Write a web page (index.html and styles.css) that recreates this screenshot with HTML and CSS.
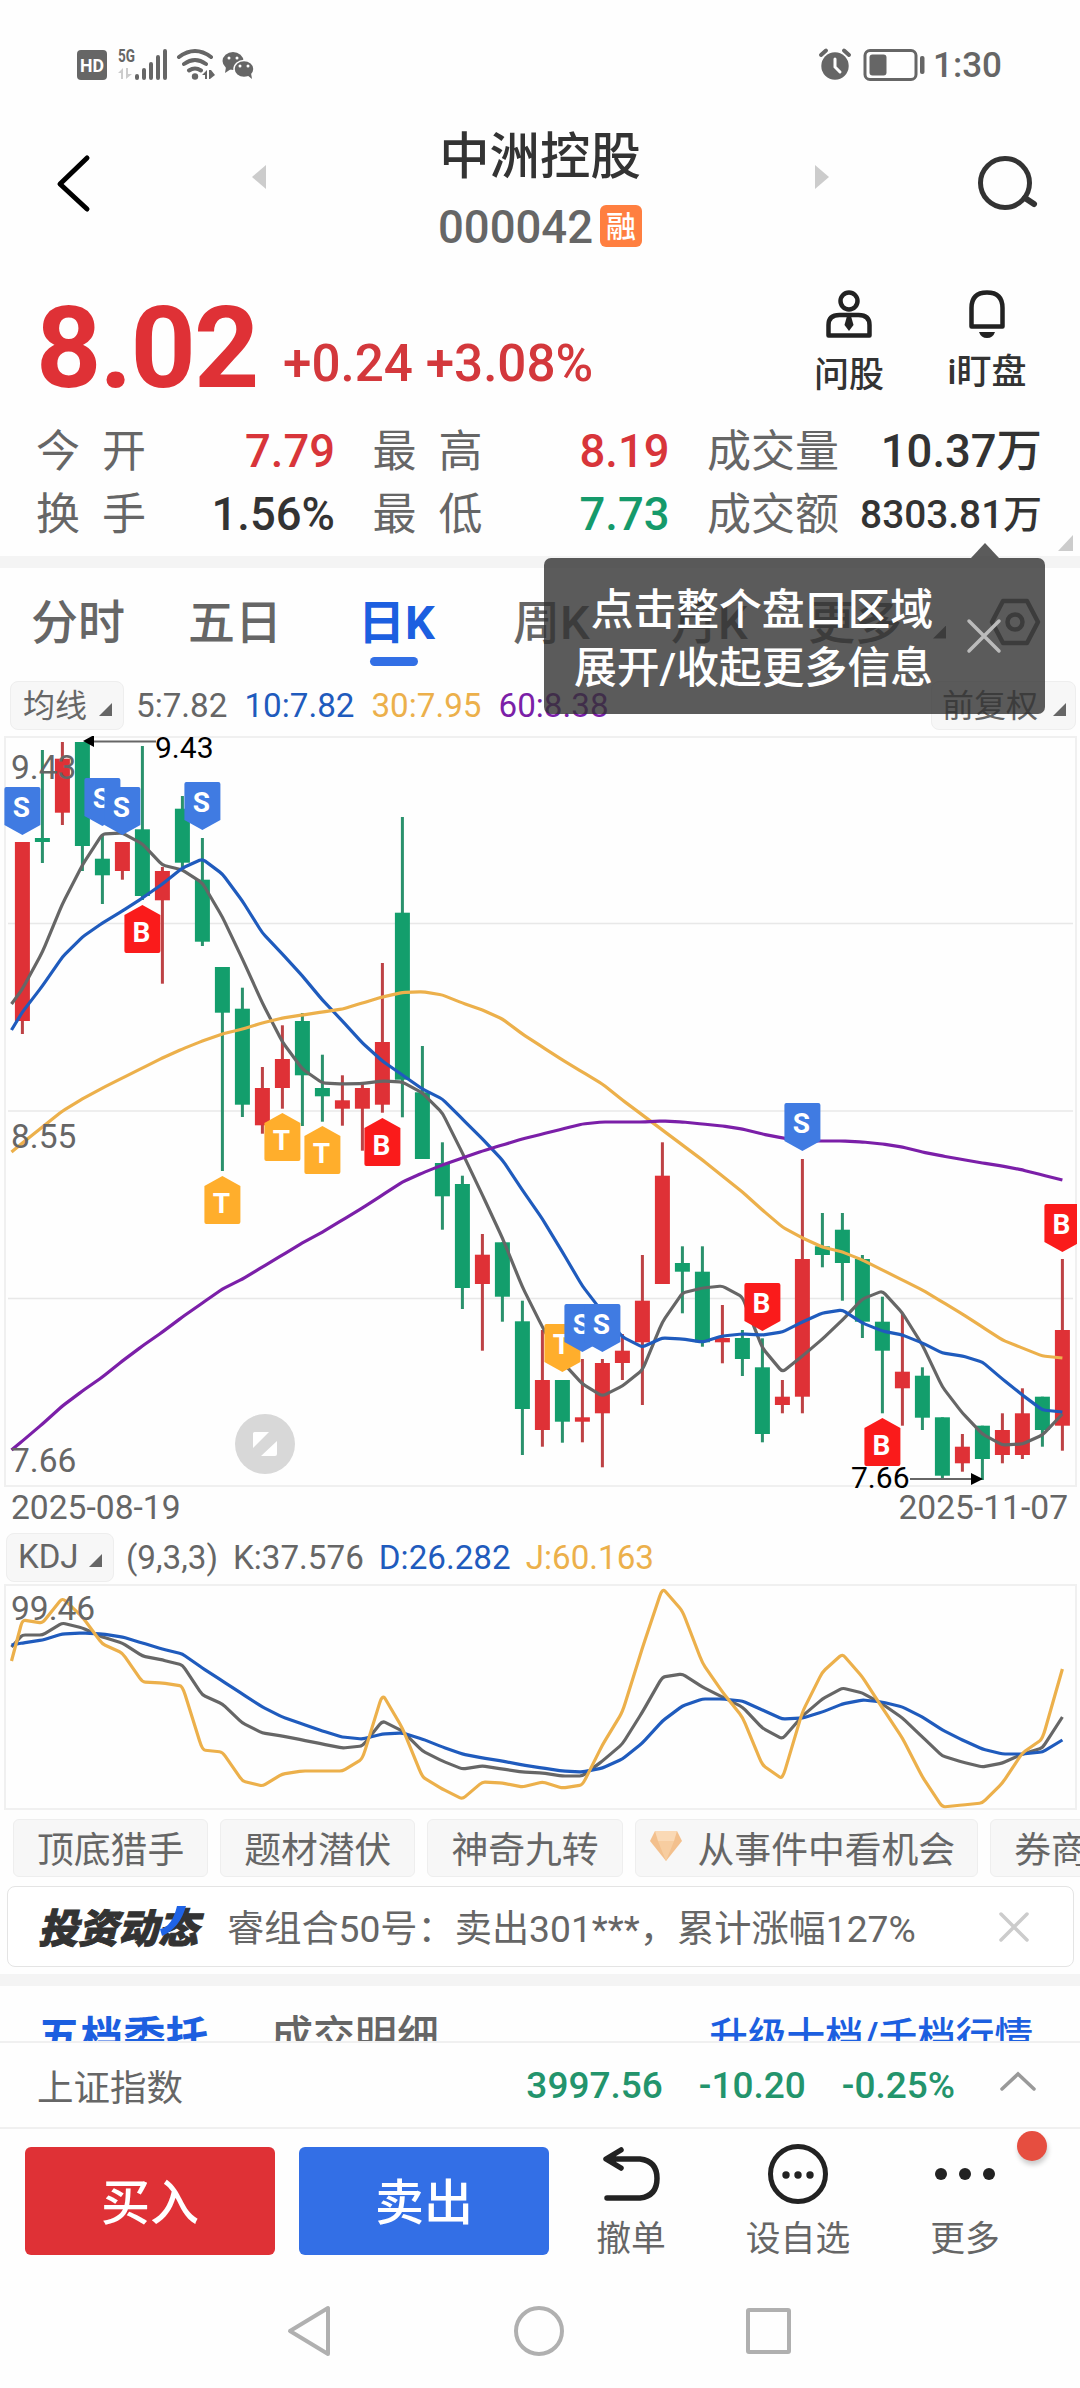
FILE: index.html
```html
<!DOCTYPE html>
<html lang="zh-CN">
<head>
  <meta charset="UTF-8">
  <meta name="viewport" content="width=device-width, initial-scale=1.0">
  <title>中洲控股 000042</title>
  <link rel="stylesheet" href="styles.css">
</head>
<body>

  <div class="status-bar">
    <svg class="status-left" width="180" height="34" viewBox="0 0 180 34" fill="#666">
      <rect x="0" y="3" width="30" height="30" rx="4"/>
      <text x="15" y="25" font-size="19" font-weight="700" fill="#fff" text-anchor="middle" textLength="24" lengthAdjust="spacingAndGlyphs">HD</text>
      <text x="41" y="15" font-size="18" font-weight="700" textLength="17" lengthAdjust="spacingAndGlyphs">5G</text>
      <path d="M41 26l5-5v11h-2v-6zM49 21h2v6h4l-6 5z" fill="#ccc"/>
      <path d="M60 29v2M67 23v8M74 17v14M81 10v21M88 4v27" stroke="#666" stroke-width="4" stroke-linecap="round"/>
      <g fill="none" stroke="#666" stroke-width="4" stroke-linecap="round">
        <path d="M102 10q16-12 32 0M107 17q11-8 22 0M112 23.500q6-4 12 0"/>
      </g>
      <circle cx="118" cy="29.500" r="3.200"/>
      <path d="M125 28l5-5v9h-2v-4zM132 23h2l4 5-5 4h-1z"/>
      <ellipse cx="156" cy="14" rx="10.500" ry="9"/>
      <path d="M149 20l-1 6 6-4z"/>
      <ellipse cx="167" cy="22" rx="10" ry="8.500" stroke="#fff" stroke-width="1.500"/>
      <path d="M170 28l5 4-1-6z"/>
      <g fill="#fff"><circle cx="152" cy="11" r="1.500"/><circle cx="160" cy="11" r="1.500"/><circle cx="163" cy="19" r="1.500"/><circle cx="171" cy="19" r="1.500"/></g>
    </svg>
    <div class="status-right">
      <svg width="108" height="34" viewBox="0 0 108 34" fill="#666">
        <circle cx="17" cy="19" r="13.700"/>
        <path d="M3 8l5-4.500M31 8l-5-4.500" stroke="#666" stroke-width="4" stroke-linecap="round"/>
        <path d="M17 12v8l5 5" fill="none" stroke="#fff" stroke-width="3" stroke-linecap="round"/>
        <rect x="47" y="3.500" width="51" height="29" rx="5" fill="none" stroke="#666" stroke-width="3"/>
        <rect x="51.500" y="7.500" width="17" height="21" rx="3"/>
        <rect x="102" y="9" width="4.500" height="18" rx="2"/>
      </svg>
      <span>1:30</span>
    </div>
  </div>

  <header class="header">
    <svg class="back" width="40" height="60" viewBox="0 0 40 60"><path d="M33 5L6 31l27 25" fill="none" stroke="#000" stroke-width="5" stroke-linecap="round" stroke-linejoin="round"/></svg>
    <svg class="step" width="16" height="26" viewBox="0 0 16 26"><path d="M15 1v24L1 13z" fill="#ccc"/></svg>
    <div class="title">
      <h1>中洲控股</h1>
      <p>000042<span class="tag">融</span></p>
    </div>
    <svg class="step" width="16" height="26" viewBox="0 0 16 26"><path d="M1 1v24l14-12z" fill="#ccc"/></svg>
    <svg class="search" width="66" height="60" viewBox="0 0 66 60" fill="none" stroke="#333" stroke-width="5"><circle cx="28" cy="30" r="24.500"/><path d="M48 45l9 6" stroke-width="6" stroke-linecap="round"/></svg>
  </header>

  <section class="quote">
    <div class="quote-top">
      <span class="price">8.02</span>
      <span class="change">+0.24 +3.08%</span>
      <div class="tool">
        <svg width="50" height="50" viewBox="0 0 50 50" fill="none" stroke="#222" stroke-width="4.500">
          <circle cx="25" cy="12" r="8.500"/>
          <path d="M4.500 46.500V36q0-10 11-10h19q11 0 11 10v10.500z" stroke-linejoin="round"/>
          <path d="M23 27h4l2.500 9-4.500 6-4.500-6z" fill="#222" stroke="none"/>
        </svg>
        <span>问股</span>
      </div>
      <div class="tool tool-watch">
        <svg width="50" height="50" viewBox="0 0 50 50" fill="none" stroke="#222" stroke-width="4.500">
          <path d="M9.500 37.500V19q0-15.500 15.500-15.500T40.500 19v18.500z" stroke-linejoin="round"/>
          <path d="M17 43h16q-2 6-8 6t-8-6z" fill="#222" stroke="none"/>
        </svg>
        <span>i盯盘</span>
      </div>
    </div>
    <div class="stats">
      <div><span>今<i></i>开</span><b class="up">7.79</b></div>
      <div><span>最<i></i>高</span><b class="up">8.19</b></div>
      <div><span>成交量</span><b>10.37万</b></div>
      <div><span>换<i></i>手</span><b>1.56%</b></div>
      <div><span>最<i></i>低</span><b class="down">7.73</b></div>
      <div><span>成交额</span><b class="small">8303.81万</b></div>
    </div>
    <svg class="fold" width="15" height="16" viewBox="0 0 15 16"><path d="M15 0v16H0z" fill="#ccc"/></svg>

    <div class="tooltip">
      <p>点击整个盘口区域<br>展开/收起更多信息</p>
      <svg width="36" height="36" viewBox="0 0 36 36"><path d="M3 3l30 30M33 3L3 33" stroke="#bbb" stroke-width="3.500" stroke-linecap="round"/></svg>
    </div>
  </section>

  <div class="band"></div>

  <nav class="tabs">
    <span>分时</span>
    <span>五日</span>
    <span class="active">日K</span>
    <span>周K</span>
    <span>月K</span>
    <span>更多<i class="tri"></i></span>
    <svg width="52" height="50" viewBox="0 0 52 50" fill="none" stroke="#666" stroke-width="4.500" stroke-linejoin="round"><path d="M14 4h24l11 21-11 21H14L3 25z"/><circle cx="26" cy="25" r="7.500"/></svg>
  </nav>

  <div class="indicator">
    <span class="select">均线<i class="tri"></i></span>
    <span class="gray">5:7.82</span>
    <span class="blue">10:7.82</span>
    <span class="gold">30:7.95</span>
    <span class="purple">60:8.38</span>
    <span class="select right">前复权<i class="tri"></i></span>
  </div>

  <svg id="kline" class="kline" width="1080" height="754" viewBox="0 736 1080 754"></svg>

  <div class="dates"><span>2025-08-19</span><span>2025-11-07</span></div>

  <div class="indicator kdj-head">
    <span class="select">KDJ<i class="tri"></i></span>
    <span class="gray">(9,3,3)</span>
    <span class="gray">K:37.576</span>
    <span class="blue">D:26.282</span>
    <span class="gold">J:60.163</span>
  </div>

  <svg id="kdj" class="kdj" width="1080" height="228" viewBox="0 1583 1080 228"></svg>

  <div class="chips">
    <span>顶底猎手</span>
    <span>题材潜伏</span>
    <span>神奇九转</span>
    <span class="gem">
      <svg width="34" height="32" viewBox="0 0 34 32"><path d="M6 1h22l5 10-16 20L1 11z" fill="#f3c08d"/><path d="M6 1h22l-3 10H9z" fill="#fad9b5"/><path d="M9 11h16l-8 20z" fill="#f7cda0"/></svg>从事件中看机会</span>
    <span>券商金股</span>
  </div>

  <div class="news">
    <strong>投资动态<svg width="30" height="34" viewBox="0 0 30 34"><path d="M1 24q12-2 17-23h9q-6 22-24 30z" fill="#1f63e6"/></svg></strong>
    <span>睿组合50号：卖出301***，累计涨幅127%</span>
    <svg width="30" height="30" viewBox="0 0 30 30"><path d="M2 2l26 26M28 2L2 28" stroke="#ccc" stroke-width="3.500" stroke-linecap="round"/></svg>
  </div>

  <div class="band"></div>

  <div class="orders">
    <b>五档委托</b>
    <span>成交明细</span>
    <a>升级十档/千档行情</a>
  </div>

  <div class="index-bar">
    <span>上证指数</span>
    <b>3997.56</b>
    <b>-10.20</b>
    <b>-0.25%</b>
    <svg width="36" height="20" viewBox="0 0 36 20"><path d="M2 18L18 3l16 15" fill="none" stroke="#999" stroke-width="3.500" stroke-linecap="round"/></svg>
  </div>

  <div class="actions">
    <button class="buy">买入</button>
    <button class="sell">卖出</button>
    <div class="action cancel">
      <svg width="60" height="60" viewBox="0 0 60 60" fill="none" stroke="#222" stroke-width="5.500" stroke-linecap="round" stroke-linejoin="round"><path d="M20 6L5 15l15 9M6 15h33q17 2 17 19.500T39 54H6"/></svg>
      <span>撤单</span>
    </div>
    <div class="action custom">
      <svg width="60" height="60" viewBox="0 0 60 60"><circle cx="30" cy="30" r="27.500" fill="none" stroke="#222" stroke-width="5"/><g fill="#222"><circle cx="18" cy="31" r="3.700"/><circle cx="30" cy="31" r="3.700"/><circle cx="42" cy="31" r="3.700"/></g></svg>
      <span>设自选</span>
    </div>
    <div class="action more">
      <svg width="60" height="60" viewBox="0 0 60 60" fill="#222"><circle cx="6" cy="30" r="6"/><circle cx="30" cy="30" r="6"/><circle cx="54" cy="30" r="6"/></svg>
      <span>更多</span>
      <i class="dot"></i>
    </div>
  </div>

  <div class="system-nav">
    <svg width="50" height="56" viewBox="0 0 50 56"><path d="M43 5v46L5 28z"/></svg>
    <svg width="56" height="56" viewBox="0 0 56 56"><circle cx="28" cy="28" r="23"/></svg>
    <svg width="50" height="56" viewBox="0 0 50 56"><rect x="5" y="7" width="41" height="42" rx="1"/></svg>
  </div>

  <script src="chart.js"></script>
</body>
</html>
```

FILE: styles.css
```css
* {
  box-sizing: border-box;
}
body {
  margin: 0;
  width: 1080px;
  height: 2388px;
  overflow: hidden;
  background: #fefefe;
  color: #333;
  font-family: Roboto, "Noto Sans CJK SC", sans-serif;
}
svg {
  display: block;
  flex: none;
}
h1, p {
  margin: 0;
  font-weight: 400;
}
i {
  font-style: normal;
}
.gray { color: #666; }
.blue { color: #1f5bbd; }
.gold { color: #ecb04b; }
.purple { color: #7b1fa8; }

/* status bar */
.status-bar {
  display: flex;
  justify-content: space-between;
  height: 120px;
  padding: 47px 78px 0 77px;
}
.status-right {
  display: flex;
  gap: 7px;
  color: #666;
  font-size: 35px;
  font-weight: 500;
  line-height: 37px;
}

/* header */
.header {
  display: flex;
  height: 145px;
  padding: 0 37px 0 54px;
}
.header .back { margin-top: 33px; }
.header .step { margin: 44px 0 0 157px; }
.header .title {
  width: 220px;
  margin-left: 163px;
  text-align: center;
}
.header .title + .step { margin-left: 164px; }
.header .search { margin: 33px 0 0 147px; }
.title h1 {
  font-size: 50.4px;
  font-weight: 500;
  line-height: 74px;
  white-space: nowrap;
}
.title p {
  display: flex;
  justify-content: center;
  align-items: center;
  gap: 7px;
  height: 66px;
  color: #666;
  font-size: 45.5px;
  font-weight: 500;
}
.tag {
  width: 42px;
  height: 42px;
  margin-top: -3px;
  border-radius: 6px;
  background: #ff7f40;
  color: #fff;
  font-size: 30px;
  font-weight: 500;
  line-height: 43px;
  text-align: center;
}

/* quote */
.quote {
  position: relative;
  height: 291px;
}
.quote-top {
  display: flex;
  height: 155px;
  padding-left: 36px;
}
.price {
  width: 247px;
  padding-top: 16px;
  color: #df3136;
  font-size: 114px;
  font-weight: 700;
  line-height: 134px;
  letter-spacing: -2px;
}
.change {
  width: 528px;
  padding-top: 64px;
  color: #d3383c;
  font-size: 51.2px;
  font-weight: 500;
  line-height: 70px;
  white-space: pre;
}
.tool {
  display: flex;
  flex-direction: column;
  align-items: center;
  width: 76px;
  padding-top: 24px;
  font-size: 35px;
  font-weight: 500;
  line-height: 44px;
  white-space: nowrap;
}
.tool span { margin-top: 15px; }
.tool-watch { margin-left: 62px; }
.tool-watch span { margin-top: 12px; }
.stats {
  display: grid;
  grid-template-columns: 299px 297px 335px;
  grid-auto-rows: 63px;
  column-gap: 37.5px;
  padding: 0 37px 0 36px;
}
.stats div {
  display: flex;
  justify-content: space-between;
  align-items: center;
  font-size: 45.4px;
  line-height: 60px;
  white-space: nowrap;
}
.stats span {
  color: #666;
  font-size: 44px;
}
.stats span i { padding-left: 22px; }
.stats b { font-weight: 500; }
.stats .small { font-size: 38.8px; }
.up { color: #d8353a; }
.down { color: #159a6b; }
.fold {
  position: absolute;
  right: 7px;
  bottom: 5px;
}

/* tooltip */
.tooltip {
  position: absolute;
  left: 544px;
  top: 293px;
  z-index: 2;
  display: flex;
  align-items: center;
  width: 501px;
  height: 156px;
  padding-right: 43px;
  border-radius: 7px;
  background: rgba(50, 50, 50, 0.8);
  color: #fff;
  font-size: 42.8px;
  line-height: 58px;
  text-align: right;
  white-space: nowrap;
}
.tooltip p {
  width: 389px;
  margin-right: 33px;
  padding-top: 5px;
  font-weight: 500;
}
.tooltip::before {
  content: "";
  position: absolute;
  left: 427px;
  top: -15px;
  border: solid transparent;
  border-width: 0 14px 15px;
  border-bottom-color: rgba(50, 50, 50, 0.8);
}

.band {
  height: 12px;
  background: #f4f4f4;
}

/* period tabs */
.tabs {
  display: grid;
  grid-template-columns: 157px 170px 155px 158px 137px 181px 52px;
  align-items: center;
  height: 108px;
  padding-left: 31px;
  color: #666;
  font-size: 47px;
  font-weight: 500;
  line-height: 56px;
  white-space: nowrap;
}
.tabs span { margin-top: 1px; }
.tabs .active {
  position: relative;
  color: #1c5fe0;
  font-weight: 700;
}
.tabs .active::after {
  content: "";
  position: absolute;
  left: 12px;
  bottom: -15px;
  width: 48px;
  height: 9px;
  border-radius: 5px;
  background: #326fe5;
}
.tri {
  display: inline-block;
  width: 13px;
  height: 13px;
  background: #666;
  clip-path: polygon(100% 0, 100% 100%, 0 100%);
}
.tabs .tri { margin-left: 31px; }

/* indicator rows */
.indicator {
  display: flex;
  align-items: center;
  height: 60px;
  margin-top: -3px;
  padding: 4px 4px 0 10px;
  font-size: 33.2px;
}
.indicator > span { margin-right: 17px; }
.indicator .select {
  display: flex;
  align-items: center;
  justify-content: space-between;
  width: 114px;
  height: 49px;
  margin-right: 12px;
  padding: 2px 11px 0 12px;
  border: 1px solid #eee;
  border-radius: 8px;
  background: #f7f7f7;
  color: #666;
  font-size: 32px;
  line-height: 46px;
  white-space: nowrap;
}
.indicator .tri { margin-top: 7px; }
.indicator .right {
  width: 145px;
  margin: 0 0 0 auto;
  padding-left: 10px;
  padding-right: 9px;
}

.kline { margin-top: 3px; }
.dates {
  display: flex;
  justify-content: space-between;
  height: 36px;
  padding: 0 12px 0 11px;
  color: #666;
  font-size: 33.6px;
  line-height: 36px;
}
.kdj-head {
  height: 58px;
  margin-top: 0;
  padding: 4px 0 0 6px;
}
.kdj-head .select {
  width: 108px;
  padding: 0 11px 0 11px;
  font-size: 33px;
}
.kdj-head > span { margin-right: 15px; }
.kdj { margin-top: -1px; }

/* strategy chips */
.chips {
  display: flex;
  gap: 12px;
  height: 58px;
  margin-top: 8px;
  padding-left: 13px;
  overflow: hidden;
}
.chips span {
  display: flex;
  flex: none;
  align-items: center;
  padding: 5px 23px 0;
  border: 1px solid #eee;
  border-radius: 6px;
  background: #f7f7f7;
  color: #666;
  font-size: 36.8px;
  line-height: 50px;
}
.chips .gem {
  gap: 15px;
  padding: 5px 22px 0 13px;
}
.chips .gem svg { margin-top: -10px; }

/* news card */
.news {
  display: flex;
  align-items: center;
  height: 81px;
  margin: 9px 6px 7px 7px;
  padding: 0 44px 0 30px;
  border: 1px solid #e4e4e4;
  border-radius: 8px;
  background: #fff;
}
.news strong {
  position: relative;
  width: 189px;
  margin-top: -2px;
  color: #333;
  font-size: 40px;
  font-weight: 900;
  font-style: italic;
  white-space: nowrap;
  -webkit-text-stroke: 1px #333;
}
.news strong svg {
  position: absolute;
  left: 121px;
  top: 8px;
}
.news span {
  flex: 1;
  margin-top: -2px;
  color: #666;
  font-size: 37.2px;
  white-space: nowrap;
}

/* order book heads, cut by the index bar */
.orders {
  display: flex;
  align-items: flex-start;
  height: 55px;
  padding: 21px 47px 0 38px;
  overflow: hidden;
  font-size: 42px;
  line-height: 60px;
  white-space: nowrap;
}
.orders b {
  width: 233px;
  color: #1c5fe0;
  font-size: 42.6px;
}
.orders span { color: #666; font-weight: 500; }
.orders a {
  margin-left: auto;
  color: #1c5fe0;
  font-size: 38.6px;
  font-weight: 500;
}

.index-bar {
  display: flex;
  align-items: center;
  height: 88px;
  padding: 0 44px 0 37px;
  border-top: 2px solid #f0f0f0;
  border-bottom: 2px solid #f0f0f0;
  color: #666;
  font-size: 36.5px;
  white-space: nowrap;
}
.index-bar span { margin-right: auto; }
.index-bar b {
  margin-left: 36px;
  color: #23946c;
  font-size: 37px;
  font-weight: 500;
}
.index-bar svg { margin: -8px 0 0 45px; }

/* bottom actions */
.actions {
  display: flex;
  height: 143px;
  padding: 18px 0 0 25px;
}
.actions button {
  width: 250px;
  height: 108px;
  margin-right: 24px;
  padding: 5px 0 0;
  border: 0;
  border-radius: 6px;
  color: #fff;
  font: 500 49px/103px Roboto, "Noto Sans CJK SC", sans-serif;
}
.buy { background: #df3136; }
.sell { background: #336fe6; }
.action {
  position: relative;
  display: flex;
  flex-direction: column;
  align-items: center;
  width: 110px;
  color: #666;
  font-size: 34.8px;
  line-height: 44px;
  white-space: nowrap;
}
.action svg { margin-top: -3px; }
.action span { margin-top: 13px; }
.cancel { margin-left: 3px; }
.custom { margin-left: 57px; }
.more { margin-left: 57px; }
.dot {
  position: absolute;
  left: 107px;
  top: -16px;
  width: 30px;
  height: 30px;
  border-radius: 50%;
  background: #e64e40;
  box-shadow: 1px 4px 5px rgba(0, 0, 0, 0.2);
}

.system-nav {
  display: flex;
  justify-content: center;
  gap: 176px;
  margin-top: 31px;
  padding-right: 3px;
}
.system-nav svg {
  fill: none;
  stroke: #b0b0b0;
  stroke-width: 4;
  stroke-linejoin: round;
}
```

FILE: chart.js
```js
var RED = '#df3136', GREEN = '#139e6c';
var GRAY = '#666', BLUE = '#1f5bbd', GOLD = '#ecb04b', PURPLE = '#7b1fa8';

// [up, high, body top, body bottom, low]
var candles = [
  [1,842,842,1021,1034],[0,750,838,842,863],[1,742,758.7,812.7,825],[0,742,742,846,871],[0,834,858.7,875.3,904],
  [1,842,842,871,879.7],[0,746,829.3,896,900],[1,867,871,900.3,983.7],[0,796,808.7,862.7,867],[0,838,879.7,941.7,946],
  [0,967,967,1012.7,1171],[0,987.7,1008.7,1104.7,1117],[1,1067,1088,1125.3,1133.7],[1,1025.3,1059,1088,1108.7],[0,1013,1021,1075.3,1126],
  [0,1054.7,1088,1096.3,1121.7],[1,1075.3,1100.3,1108.7,1125.7],[1,1083.7,1088,1108.7,1150.7],[1,963,1042,1104.7,1112.7],[0,817,912.7,1079.7,1117.3],
  [0,1046,1092.3,1159,1159],[0,1142.3,1163,1196.3,1229.7],[0,1175.7,1184,1288,1309],[1,1234,1254.7,1284,1350.7],[0,1242.3,1242.3,1296.7,1321.7],
  [0,1300.7,1321.3,1409,1455],[1,1330,1380,1430,1446.7],[0,1380,1380,1421.7,1442.7],[1,1359,1417.3,1421.7,1442.3],[1,1359,1363,1413.3,1467.3],
  [1,1334,1350.7,1363,1380],[1,1255,1300.7,1342.3,1405],[1,1142.3,1175.7,1284,1284],[0,1246.3,1263,1271.7,1313.3],[0,1246.3,1271.7,1342.3,1346.7],
  [1,1305,1338,1342.3,1363.3],[0,1330,1338,1359,1376],[0,1338.3,1367.3,1434,1442.3],[1,1380,1396.7,1405,1413.3],[1,1159,1259,1396.7,1413.3],
  [0,1213,1246.3,1255,1267.3],[0,1213,1229.7,1263,1300.7],[0,1255,1259,1321.7,1338],[0,1296.7,1321.7,1350.7,1413.3],[1,1313.3,1371.7,1388.3,1425.7],
  [0,1367.3,1375.7,1417.7,1430],[0,1417.3,1417.3,1475.7,1480],[1,1434,1446.7,1463.3,1471.7],[0,1425.7,1425.7,1459,1480],[1,1413.3,1430,1455,1463.3],
  [1,1388.3,1413.3,1455,1459],[0,1396.7,1396.7,1430,1446.7],[1,1259,1330,1425.7,1450.7]
];

// the first value of each series is the left edge, the rest are one per day
var ma5 = [1004,989,952,904,865,834,833,844,865,870,883,917,959,1003,1042,1069,1083,1084,1083.5,1081,1082,1093,1113,1153,1195,1238,1287,1327,1362,1384,1396,1386,1370,1322,1293,1288,1286,1297,1348,1372,1356,1339,1320,1299,1291,1313,1345,1387,1413,1434,1445,1444,1435,1414];
var ma10 = [1030,1012,986,957,937,923,911,898,884,868,859,874,901,933,954,976,1000,1021,1043,1061,1075,1089,1099,1119,1139,1160,1190,1219,1252,1286,1312,1337,1347,1338,1339,1342,1336,1334,1335,1332,1322,1313,1310,1323,1331,1335,1343,1353,1356,1362,1379,1395,1410,1412];
var ma30 = [1152,1143,1127,1111,1099,1088,1078,1068,1058,1049,1041,1034,1029,1023,1018,1015,1012,1009,1003,997,992.5,991.7,995,1003,1010,1019,1034,1047,1060,1072,1084,1100,1115,1130,1145,1160,1176,1192,1210,1227,1238,1247,1252,1260,1270,1280,1290,1302,1314,1327,1340,1348,1356,1358];
var ma60 = [1450,1441,1424,1406,1391,1377,1361,1346,1332,1317,1303,1289,1279,1267,1255,1243,1232,1220,1208,1195,1182,1173,1165,1158,1151,1145,1139,1134,1129,1124,1122,1122,1122,1121,1122,1124,1126,1129,1134,1138,1141,1141,1141,1142,1144,1147,1152,1156,1159.500,1163,1166,1170,1175,1180];

var k = [1647,1635,1635,1623,1628,1637,1643,1656,1660,1665,1695,1704,1723,1733,1736,1740,1744,1748,1746,1721,1731,1751,1761,1769,1766,1769,1772,1773,1776,1776,1761,1744,1712,1677,1674,1687,1697,1707,1728,1739,1716,1699,1688,1693,1704,1718,1737,1756,1762,1767,1763,1754,1748,1717];
var d = [1645,1643,1640,1634,1633,1634,1637,1643,1649,1654,1668,1681,1694,1707,1717,1724,1731,1737,1739,1734,1733,1739,1747,1754,1758,1761,1765,1768,1771,1772,1768,1759,1743,1721,1706,1699,1699,1701,1710,1719,1718,1712,1704,1700,1702,1707,1717,1730,1740,1749,1754,1754,1752,1740];
var j = [1661,1620,1623,1598,1617,1644,1653,1682,1683,1686,1750,1752,1781,1786,1774,1771,1771,1771,1759,1694,1728,1777,1789,1799,1782,1783,1787,1782,1788,1785,1745,1712,1648,1588,1611,1663,1692,1717,1765,1779,1712,1672,1654,1677,1708,1738,1777,1807,1805,1803,1783,1753,1739,1669];

// [letter, day, top of the badge, points down]
var badges = [
  ['S',0,787,1],['S',4,778,1],['S',5,787,1],['S',9,782,1],['B',6,905,0],
  ['T',10,1176,0],['T',13,1113,0],['T',15,1126,0],['B',18,1118,0],
  ['T',27,1324,1],['S',28,1304,1],['S',29,1304,1],['B',37,1283,1],
  ['S',39,1103,1],['B',43,1418,0],['B',52,1204,1]
];
var badgeColors = { S: '#407be2', B: '#fa1b1b', T: '#ffae2c' };

function dayX(i) {
  return 22.4 + i * 20;
}

// each corner is rounded off with a short curve
function line(values, color) {
  var r = 0.14;
  var pts = values.map(function(y, i) {
    return [i === 0 ? 11.5 : dayX(i - 1), y];
  });
  var path = 'M' + pts[0];
  for (var i = 1; i < pts.length - 1; i++) {
    var a = pts[i - 1], p = pts[i], b = pts[i + 1];
    path += 'L' + (p[0] + (a[0] - p[0]) * r) + ' ' + (p[1] + (a[1] - p[1]) * r);
    path += 'Q' + p[0] + ' ' + p[1] + ' ' + (p[0] + (b[0] - p[0]) * r) + ' ' + (p[1] + (b[1] - p[1]) * r);
  }
  path += 'L' + pts[pts.length - 1];
  return '<path d="' + path + '" fill="none" stroke="' + color + '" stroke-width="3.2" stroke-linejoin="round"/>';
}

function text(x, y, size, color, str) {
  return '<text x="' + x + '" y="' + y + '" font-size="' + size + '" fill="' + color + '">' + str + '</text>';
}

function badge(b) {
  var x = dayX(b[1]), y = b[2];
  var shape = b[3]
    ? 'M' + (x - 18) + ' ' + (y + 2) + 'q0-2 2-2h32q2 0 2 2v36l-18 10l-18-10z'
    : 'M' + (x - 18) + ' ' + (y + 10) + 'l18-10l18 10v36q0 2-2 2h-32q-2 0-2-2z';
  return '<path d="' + shape + '" fill="' + badgeColors[b[0]] + '"/>' +
    '<text x="' + (x - 1) + '" y="' + (y + (b[3] ? 30 : 37)) + '" font-size="28" font-weight="700" fill="#fff" text-anchor="middle">' + b[0] + '</text>';
}

function drawKline() {
  var out = '<rect x="5" y="737" width="1071" height="749" fill="none" stroke="#f0f0f0" stroke-width="2"/>';
  [923.5, 1111, 1298.5].forEach(function(y) {
    out += '<path d="M8 ' + y + 'H1073" stroke="#e8e8e8" stroke-width="1.5"/>';
  });
  candles.forEach(function(c, i) {
    var x = dayX(i);
    out += '<rect x="' + (x - 1.5) + '" y="' + c[1] + '" width="3" height="' + (c[4] - c[1]) + '" fill="' + (c[0] ? '#bd4245' : '#2b916c') + '"/>';
    out += '<rect x="' + (x - 7.5) + '" y="' + c[2] + '" width="15" height="' + (c[3] - c[2]) + '" fill="' + (c[0] ? RED : GREEN) + '"/>';
  });
  out += line(ma5, GRAY) + line(ma10, BLUE) + line(ma30, GOLD) + line(ma60, PURPLE);
  out += badges.map(badge).join('');
  // the last badge is cut at the frame
  out += '<rect x="1077" y="1200" width="3" height="56" fill="#fefefe"/>';
  out += text(11, 779, 33.5, GRAY, '9.43') + text(11, 1148, 33.5, GRAY, '8.55') + text(11, 1472, 33.5, GRAY, '7.66');
  out += '<path d="M94 741.5H156M910 1479H972" stroke="#666" stroke-width="2"/>';
  out += '<path d="M83 741l11-6v12zM983 1479l-12-6v12z"/>';
  out += text(155, 757.5, 30, '#000', '9.43') + text(851, 1487.5, 30, '#000', '7.66');
  out += '<circle cx="265" cy="1444" r="30" fill="#d8d8d8"/>';
  out += '<path d="M253 1433.500q0-1.500 1.500-1.500H269l-16 16zM277 1441v13q0 2-2 2h-14z" fill="#fff"/>';
  document.getElementById('kline').innerHTML = out;
}

function drawKdj() {
  var out = '<rect x="5" y="1585" width="1071" height="224" fill="none" stroke="#f0f0f0" stroke-width="2"/>';
  out += line(k, GRAY) + line(d, BLUE) + line(j, GOLD);
  out += text(11, 1620, 33.5, GRAY, '99.46');
  document.getElementById('kdj').innerHTML = out;
}

drawKline();
drawKdj();
```
